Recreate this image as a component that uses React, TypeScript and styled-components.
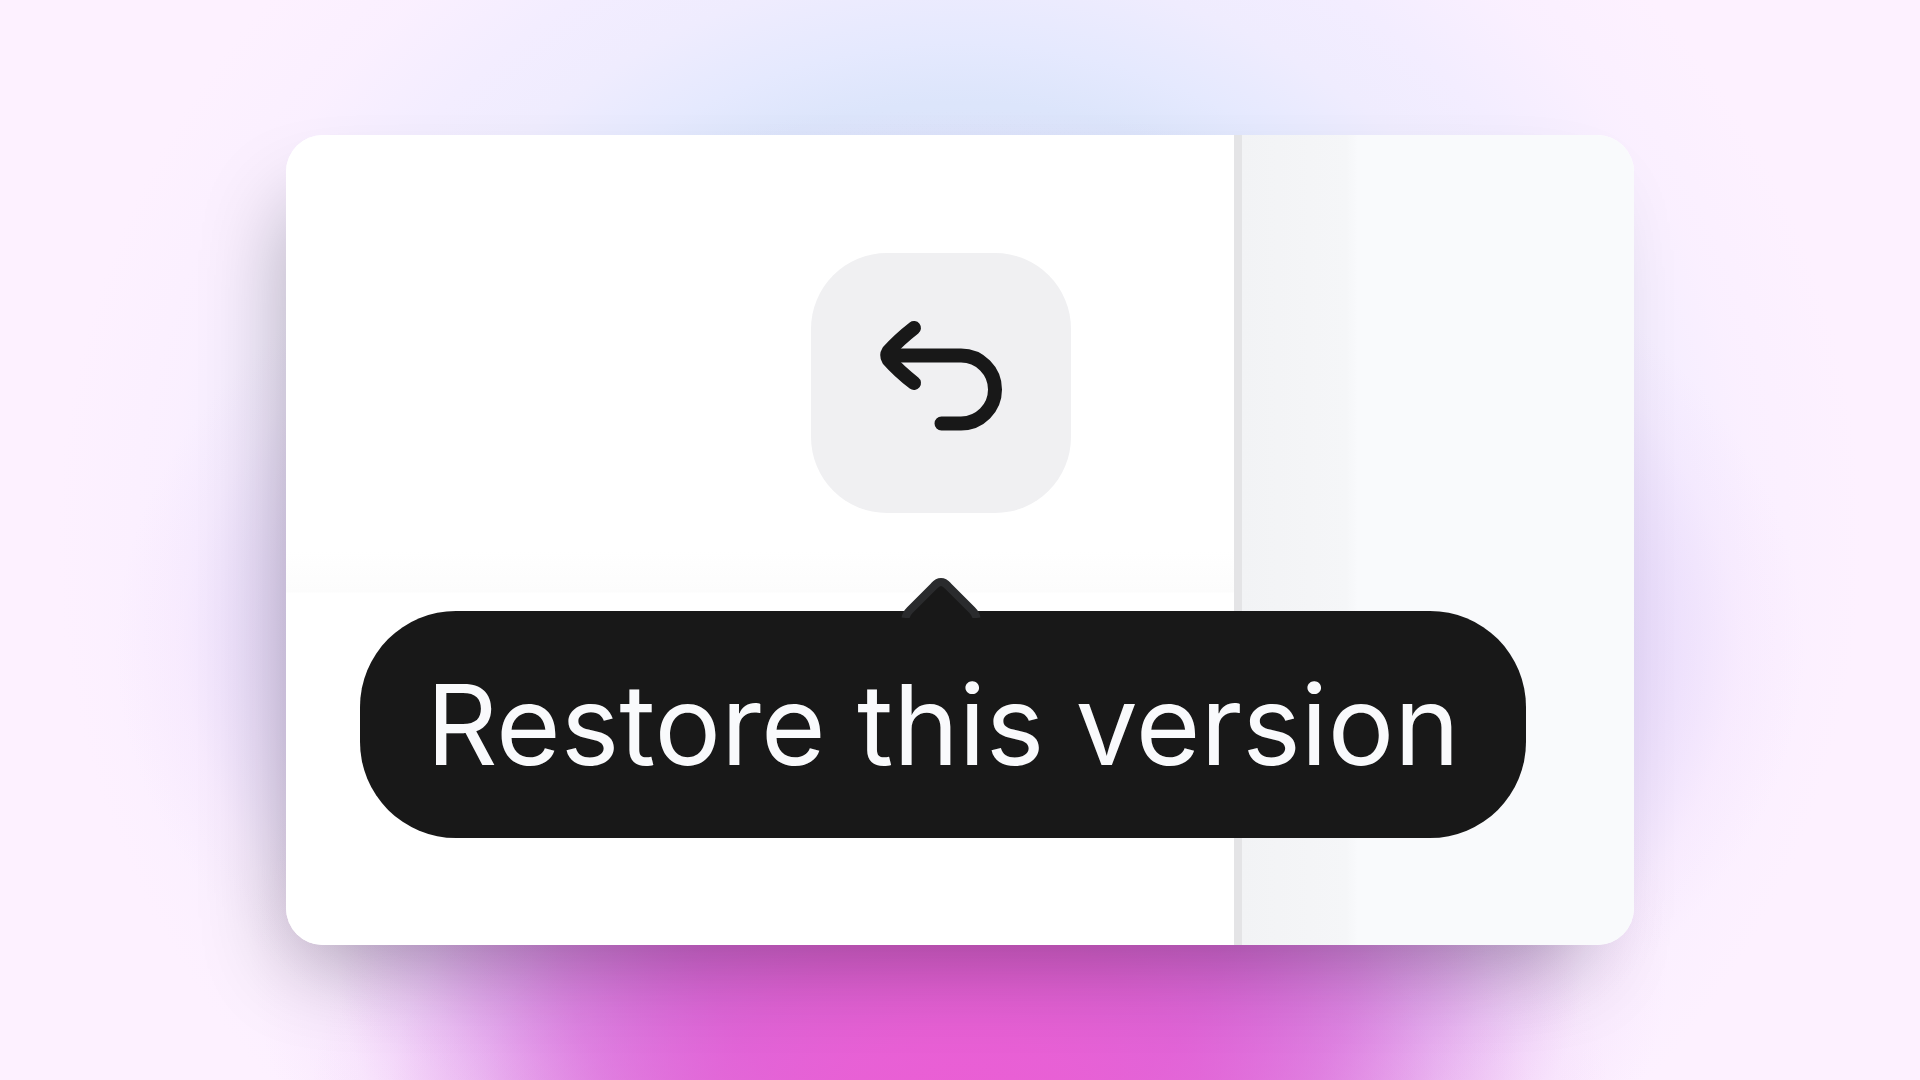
import React from "react";
import styled, { createGlobalStyle } from "styled-components";

const GlobalStyle = createGlobalStyle`
  *, *::before, *::after { box-sizing: border-box; }
  body { margin: 0; font-family: Inter, "Liberation Sans", sans-serif; }
`;

const Stage = styled.main`
  display: flex;
  min-height: 100vh;
  padding: 135px 286px;
  background-color: #fdf1ff;
  background-image:
    radial-gradient(ellipse 34% 48% at 50% 105%, rgba(236, 92, 212, 0.98) 0%, rgba(234, 94, 212, 0.9) 20%, rgba(230, 94, 212, 0.76) 38%, rgba(226, 98, 214, 0.5) 56%, rgba(226, 120, 224, 0.24) 74%, rgba(232, 150, 236, 0.08) 88%, rgba(253, 241, 255, 0) 100%),
    radial-gradient(ellipse 37% 44% at 50% 88%, rgba(208, 100, 220, 0.9) 0%, rgba(208, 100, 220, 0.84) 36%, rgba(210, 108, 222, 0.62) 56%, rgba(218, 136, 230, 0.34) 74%, rgba(232, 180, 242, 0.12) 88%, rgba(253, 241, 255, 0) 100%),
    radial-gradient(ellipse 44% 50% at 50% 60%, rgba(206, 170, 236, 0.56) 0%, rgba(206, 170, 236, 0.56) 62%, rgba(214, 188, 243, 0.38) 80%, rgba(232, 206, 248, 0.14) 92%, rgba(253, 241, 255, 0) 100%),
    radial-gradient(ellipse 47% 78% at 50% 50%, #d8e3fa 0%, #dce5fb 52%, #e5e9fe 59%, #efecfe 68%, #f3edff 77%, rgba(249, 239, 255, 0.7) 88%, rgba(253, 241, 255, 0) 100%);
`;

const Card = styled.section`
  display: flex;
  flex: 1;
  border-radius: 37px;
  background: #fff;
  box-shadow: -24px 44px 88px -28px rgba(0, 0, 0, 0.3);
`;

const Content = styled.div`
  position: relative;
  z-index: 1;
  display: flex;
  flex: 1;
  justify-content: flex-end;
  align-items: flex-start;
  padding: 118px 163px;
  border-radius: 37px 0 0 37px;
  background: linear-gradient(#fff 416px, #fcfcfc 457px, #fff 458px);
`;

const SidePanel = styled.aside`
  flex: 0 0 400px;
  border-left: 8px solid #e4e4e6;
  border-radius: 0 37px 37px 0;
  background: linear-gradient(90deg, #f2f3f5 0, #f5f6f8 104px, #f9fafc 116px);
`;

const Anchor = styled.div`
  position: relative;
`;

const IconButton = styled.button`
  display: grid;
  place-items: center;
  width: 260px;
  height: 260px;
  padding: 0;
  border: 0;
  border-radius: 76px;
  background: #f0f0f2;
  color: #181818;
  cursor: pointer;
`;

const Tooltip = styled.div`
  position: absolute;
  top: 358px;
  right: -455px;
  width: 1166px;
  padding: 58px 0;
  border-radius: 96px;
  background: #181818;
  color: #f9fafc;
  font-size: 111px;
  line-height: 111px;
  text-align: center;
  white-space: nowrap;
`;

const Pointer = styled.svg`
  position: absolute;
  top: 324px;
  left: 90px;
  display: block;
`;

function UndoIcon() {
  return (
    <svg width="144" height="144" viewBox="0 0 144 144" fill="none" stroke="currentColor" strokeWidth="14" strokeLinecap="round" strokeLinejoin="round" aria-hidden="true">
      <path d="M45 17C36 24 27 32 19.5 40.5Q17 44.5 19.5 48.5C27 57 36 65 45 72" />
      <path d="M20 44.5H92A34 34 0 0 1 92 112.5H72.5" />
    </svg>
  );
}

export default function App() {
  return (
    <>
      <GlobalStyle />
      <Stage>
        <Card>
          <Content>
            <Anchor>
              <IconButton type="button" aria-label="Restore" aria-describedby="restore-tip">
                <UndoIcon />
              </IconButton>
              <Tooltip role="tooltip" id="restore-tip">Restore this version</Tooltip>
              <Pointer width="80" height="41" viewBox="0 0 80 41" aria-hidden="true">
                <path d="M4.5 41Q5 37 9 33L33 9Q40 1 47 9L71 33Q75 37 75.5 41" fill="#181818" stroke="#2a2b2d" strokeWidth="8" />
              </Pointer>
            </Anchor>
          </Content>
          <SidePanel />
        </Card>
      </Stage>
    </>
  );
}
